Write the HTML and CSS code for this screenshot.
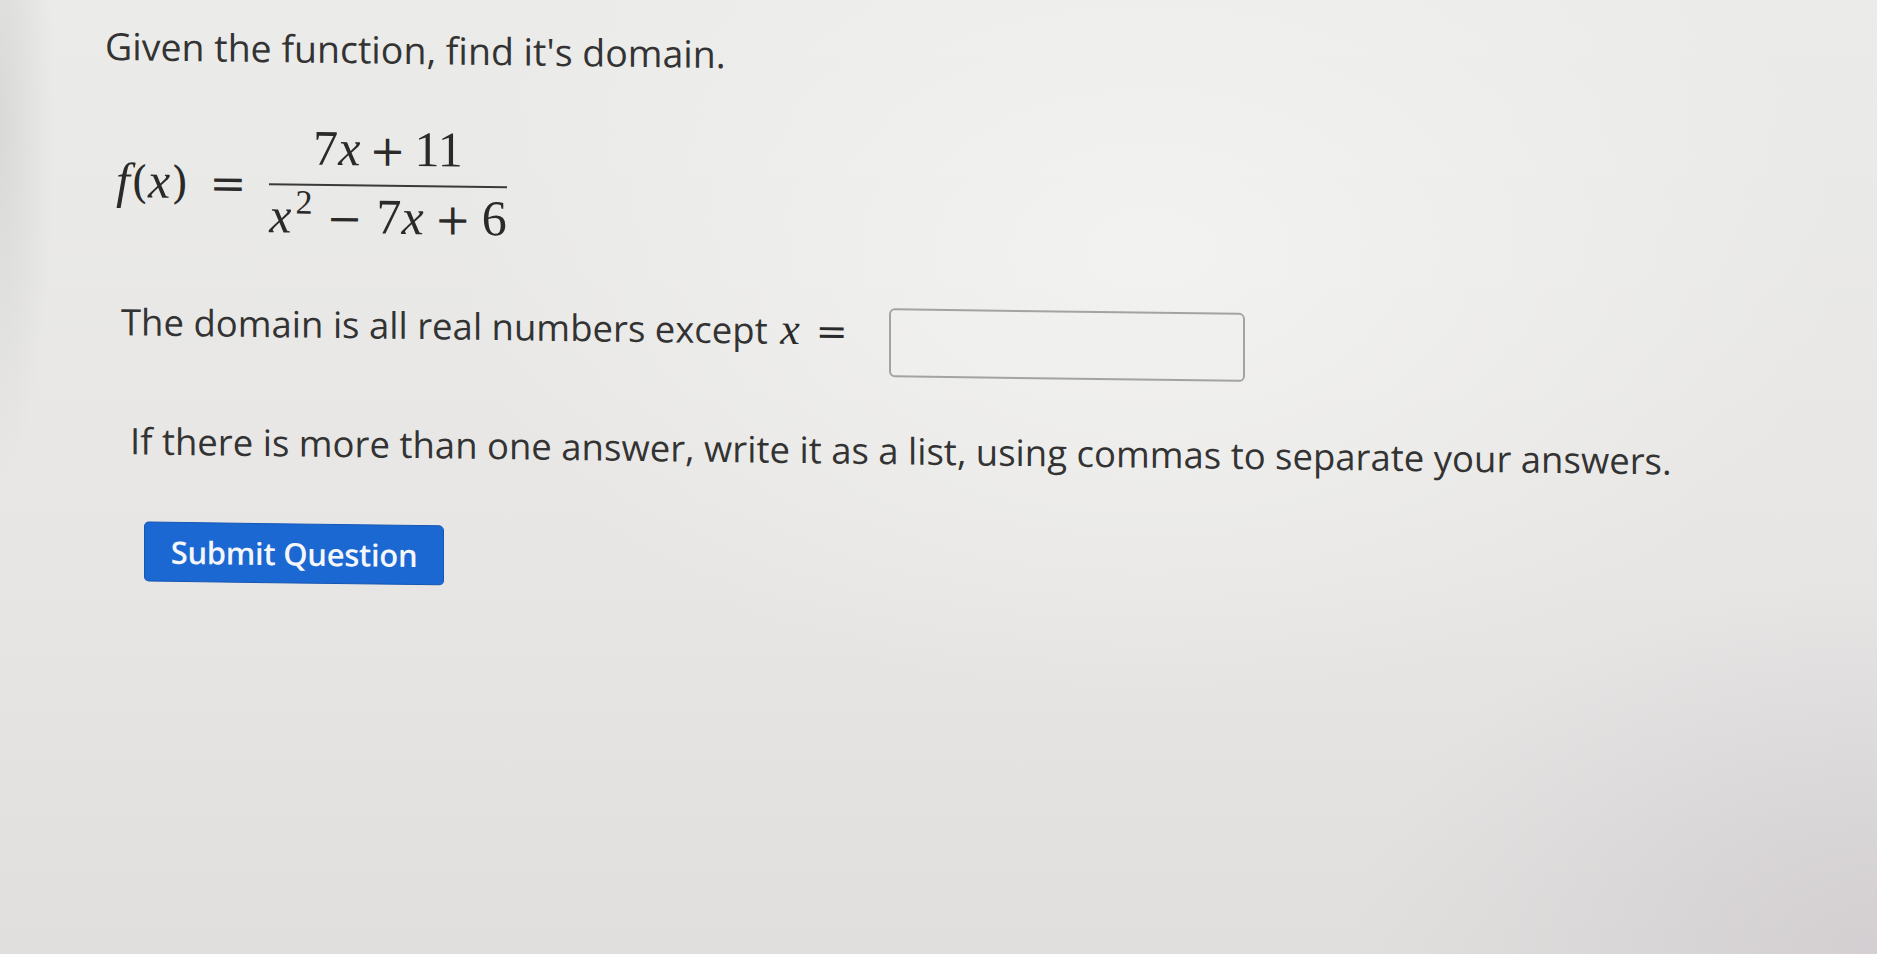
FILE: index.html
```html
<!DOCTYPE html>
<html lang="en">
<head>
<meta charset="utf-8">
<title>Domain question</title>
<link rel="stylesheet" href="styles.css">
</head>
<body>
<main class="page">
  <div class="question">
    <p class="title">Given the function, find it's domain.</p>
    <div class="formula">
      <span class="lhs"><i class="mi f">f</i><span class="mp">(</span><i class="mi">x</i><span class="mp">)</span><span class="rel">=</span></span>
      <span class="frac">
        <span class="num">7<i class="mi">x</i><span class="bin">+</span>11</span>
        <span class="bar"></span>
        <span class="den"><i class="mi">x</i><sup class="sup">2</sup><span class="bin minus">−</span>7<i class="mi">x</i><span class="bin">+</span>6</span>
      </span>
    </div>
    <div class="answer-row">
      <span class="prompt">The domain is all real numbers except <span class="inline-math"><i class="mi">x</i><span class="rel">=</span></span></span>
      <input class="answer" type="text" aria-label="answer">
    </div>
    <p class="hint">If there is more than one answer, write it as a list, using commas to separate your answers.</p>
    <button class="submit" type="button">Submit Question</button>
  </div>
</main>
</body>
</html>
```

FILE: styles.css
```css
html, body {
  margin: 0;
  padding: 0;
  height: 100%;
}

body {
  background-color: #e8e7e6;
  background-image:
    radial-gradient(ellipse 1000px 650px at 1150px 250px, rgba(244, 244, 242, 0.85), rgba(244, 244, 242, 0) 70%),
    radial-gradient(ellipse 700px 500px at 1877px 954px, rgba(205, 200, 204, 0.7), rgba(205, 200, 204, 0) 75%),
    radial-gradient(ellipse 60px 400px at 0px 120px, rgba(205, 205, 203, 0.6), rgba(205, 205, 203, 0) 90%),
    linear-gradient(180deg, #ebebe9 0%, #e7e6e5 60%, #e1dfde 100%);
  color: #333333;
  font-family: "Open Sans", "Liberation Sans", sans-serif;
  overflow: hidden;
}

.page {
  height: 954px;
}

.question {
  padding: 20px 0 0 105px;
  transform: skewY(0.75deg);
  transform-origin: 105px 0;
}

.title {
  margin: 0;
  font-size: 37.5px;
  line-height: 51px;
}

/* ---------- math ---------- */
.formula {
  display: flex;
  align-items: center;
  margin: 47px 0 0 11px;
  font-family: "Liberation Serif", "DejaVu Serif", serif;
  font-size: 50px;
  line-height: 54px;
  color: #2a2a2a;
}

.mi {
  font-style: italic;
}

.lhs {
  display: inline-flex;
  align-items: baseline;
  margin-top: 2px;
}

.mp {
  font-family: "DejaVu Serif", serif;
  font-size: 44px;
  font-weight: 300;
}

.lhs .mi + .mp {
  margin-left: 1px;
}

.rel {
  font-family: "DejaVu Serif", serif;
  font-size: 44px;
  margin: 0 16px 0 21px;
}

.bin {
  font-family: "DejaVu Serif", serif;
  font-size: 43px;
  margin: 0 9px;
}

.den .bin {
  margin: 0 11px;
}

.den .bin.minus {
  margin: 0 14px;
}

.frac {
  display: inline-flex;
  flex-direction: column;
  align-items: center;
  padding: 0 7px;
  margin-left: 0;
}

.num,
.den {
  display: block;
  white-space: nowrap;
}

.num {
  margin-bottom: 7px;
}

.bar {
  display: block;
  align-self: stretch;
  height: 2px;
  background: #3a3a3a;
}

.den {
  margin-top: 3px;
}

.sup {
  font-size: 34px;
  vertical-align: 19px;
  line-height: 0;
  margin-left: 4px;
}

/* ---------- answer row ---------- */
.answer-row {
  display: flex;
  align-items: flex-start;
  margin: 54px 0 0 16px;
}

.prompt {
  font-size: 36.5px;
  line-height: 50px;
  white-space: nowrap;
}

.inline-math {
  font-family: "Liberation Serif", "DejaVu Serif", serif;
  font-size: 44px;
  color: #2a2a2a;
  margin-left: 3px;
}

.inline-math .rel {
  font-size: 38px;
  margin: 0 0 0 16px;
}

.answer {
  display: block;
  box-sizing: border-box;
  width: 356px;
  height: 69px;
  margin: 2px 0 0 41px;
  border: 2px solid #a3a3a1;
  border-radius: 6px;
  background: rgba(240, 240, 238, 0.6);
  font: inherit;
  font-size: 34px;
  padding: 0 12px;
  color: #333;
}

/* ---------- hint & button ---------- */
.hint {
  margin: 48px 0 0 25px;
  font-size: 36.5px;
  line-height: 50px;
  white-space: nowrap;
}

.submit {
  display: block;
  box-sizing: border-box;
  width: 300px;
  height: 60px;
  margin: 56px 0 0 39px;
  padding: 0;
  border: 1px solid #1656b3;
  border-radius: 5px;
  background: #1c68d2;
  color: #f4f6fa;
  font-family: "Open Sans", "Liberation Sans", sans-serif;
  font-size: 31px;
  font-weight: 600;
  letter-spacing: -0.3px;
  cursor: pointer;
}
```
